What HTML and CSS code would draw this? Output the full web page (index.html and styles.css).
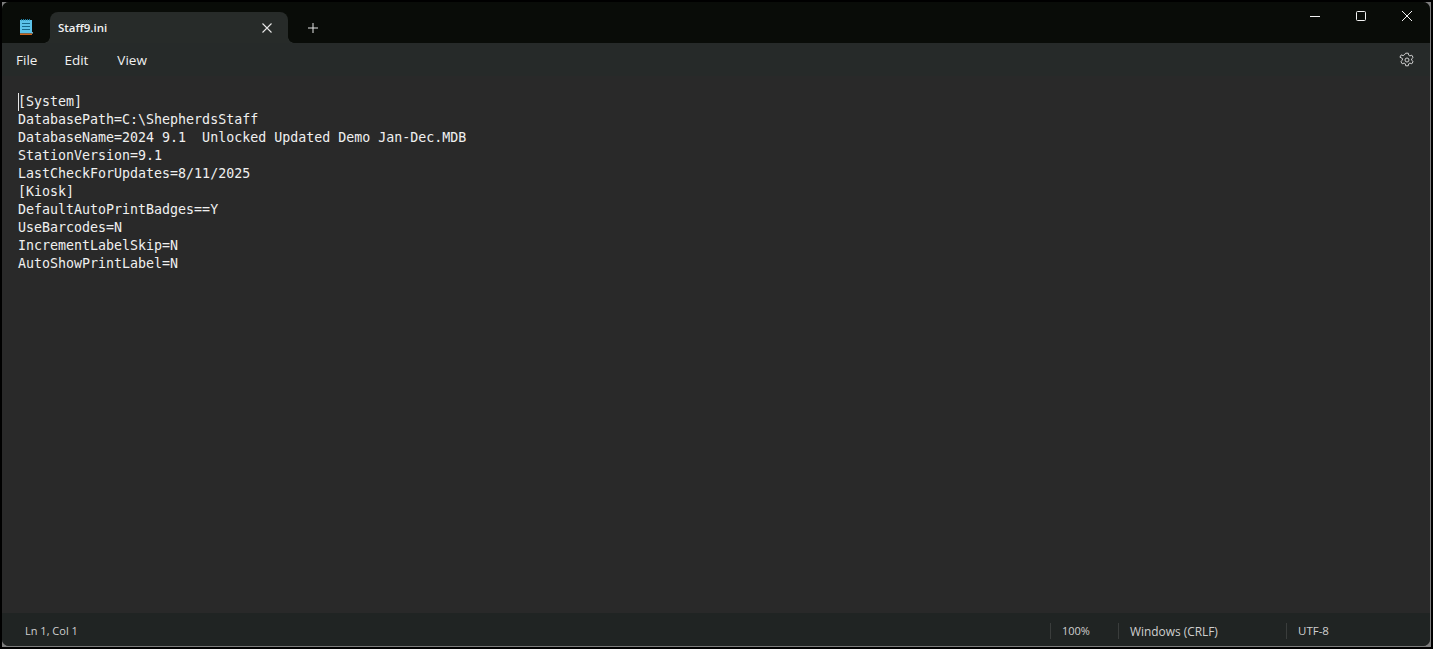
FILE: index.html
```html
<!DOCTYPE html>
<html lang="en">
<head>
<meta charset="utf-8">
<title>Staff9.ini - Notepad</title>
<link rel="stylesheet" href="styles.css">
</head>
<body>
<div class="frame">
<div class="window">
  <header class="titlebar">
    <div class="app-icon">
      <svg width="13" height="16" viewBox="0 0 13 16">
        <rect x="0" y="1" width="12" height="13.5" fill="#5cc3ea"/>
        <rect x="0" y="14.5" width="12" height="1.5" fill="#d0651c"/>
        <path d="M12 13.5l1-.5v1l-1 1z" fill="#9fdcf2"/>
        <path d="M1.5 1.5V0M3.5 1.5V0M5.5 1.5V0M7.5 1.5V0M9.5 1.5V0" stroke="#1f7fa3" stroke-width="1"/>
        <path d="M2 4.5H10M2 7.5H10M2 10.5H10" stroke="#17688a" stroke-width="1"/>
      </svg>
    </div>
    <div class="tab">
      <span class="tab-title">Staff9.ini</span>
      <svg class="tab-close" width="10" height="10" viewBox="0 0 10 10"><path d="M.5 .5L9.5 9.5M9.5 .5L.5 9.5" stroke="#e6e6e6" stroke-width="1.1" fill="none"/></svg>
    </div>
    <div class="tab-add">
      <svg width="10" height="10" viewBox="0 0 10 10"><path d="M5 0V10M0 5H10" stroke="#e6e6e6" stroke-width="1" fill="none"/></svg>
    </div>
    <div class="caption">
      <button class="cap-btn"><svg width="10" height="10" viewBox="0 0 10 10"><path d="M0 5.5H10" stroke="#f2f2f2" stroke-width="1"/></svg></button>
      <button class="cap-btn"><svg width="10" height="10" viewBox="0 0 10 10"><rect x=".5" y=".5" width="9" height="9" rx="1" fill="none" stroke="#f2f2f2" stroke-width="1"/></svg></button>
      <button class="cap-btn"><svg width="10" height="10" viewBox="0 0 10 10"><path d="M0 0L10 10M10 0L0 10" stroke="#f2f2f2" stroke-width="1" fill="none"/></svg></button>
    </div>
  </header>
  <nav class="menubar">
    <span class="menu-item menu-file">File</span>
    <span class="menu-item menu-edit">Edit</span>
    <span class="menu-item">View</span>
    <svg class="gear" width="16" height="16" viewBox="0 0 16 16">
      <path d="M6.7 1.2h2.6l.4 2 1.2.7 1.9-.7 1.3 2.3-1.5 1.3v1.4l1.5 1.3-1.3 2.3-1.9-.7-1.2.7-.4 2H6.7l-.4-2-1.2-.7-1.9.7-1.3-2.3 1.5-1.3V6.5L.9 5.2l1.3-2.3 1.9.7 1.2-.7z" fill="none" stroke="#cfcfcf" stroke-width="1" stroke-linejoin="round"/>
      <circle cx="8" cy="8" r="2" fill="none" stroke="#cfcfcf" stroke-width="1"/>
    </svg>
  </nav>
  <main class="editor"><pre class="text"><span class="caret"></span>[System]
DatabasePath=C:\ShepherdsStaff
DatabaseName=2024 9.1  Unlocked Updated Demo Jan-Dec.MDB
StationVersion=9.1
LastCheckForUpdates=8/11/2025
[Kiosk]
DefaultAutoPrintBadges==Y
UseBarcodes=N
IncrementLabelSkip=N
AutoShowPrintLabel=N</pre></main>
  <footer class="statusbar">
    <span class="status-pos">Ln 1, Col 1</span>
    <span class="status-cell status-zoom">100%</span>
    <span class="status-cell status-eol">Windows (CRLF)</span>
    <span class="status-cell status-enc">UTF-8</span>
  </footer>
</div>
</div>
</body>
</html>
```
FILE: styles.css
```css
* { box-sizing: border-box; }
html, body { margin: 0; height: 100%; background: #000; overflow: hidden; }
body { padding: 2px; }
.frame {
  height: 645px;
  padding: 0 1px 1px 0;
  background: #7d7d7d;
}
.window {
  height: 644px;
  display: flex;
  flex-direction: column;
  background: #292929;
  border-radius: 7px;
  overflow: hidden;
  font-family: "Open Sans", "Noto Sans", sans-serif;
  color: #e8e8e8;
}
.titlebar {
  height: 41px;
  flex: none;
  display: flex;
  align-items: flex-end;
  background: #090c08;
}
.app-icon { width: 48px; height: 31px; padding: 7px 0 0 18px; }
.app-icon svg { display: block; }
.tab {
  position: relative;
  width: 238px;
  height: 31px;
  background: #272b29;
  border-radius: 8px 8px 0 0;
  display: flex;
  align-items: center;
  justify-content: space-between;
  padding: 0 16px 0 8px;
}
.tab::before, .tab::after {
  content: "";
  position: absolute;
  bottom: 0;
  width: 6px;
  height: 6px;
}
.tab::before { left: -6px; background: radial-gradient(circle at 0 0, transparent 5.5px, #272b29 6px); }
.tab::after { right: -6px; background: radial-gradient(circle at 100% 0, transparent 5.5px, #272b29 6px); }
.tab-title { font-size: 11.5px; font-weight: 600; color: #f2f2f2; }
.tab-close { display: block; }
.tab-add { width: 50px; height: 31px; padding: 11px 0 0 20px; }
.tab-add svg { display: block; }
.caption { margin-left: auto; height: 41px; display: flex; align-self: flex-start; }
.cap-btn {
  width: 46px;
  height: 28px;
  padding: 0;
  border: 0;
  background: none;
  display: flex;
  align-items: center;
  justify-content: center;
}
.menubar {
  height: 33px;
  flex: none;
  display: flex;
  align-items: center;
  padding: 0 15px 0 14px;
  background: #262a29;
  font-size: 13.5px;
  color: #f0f0f0;
}
.menu-item { margin-right: 28px; }
.menu-file { margin-right: 27px; }
.menu-edit { margin-right: 29px; }
.gear { margin-left: auto; display: block; }
.editor { flex: 1; padding: 17px 0 0 16px; background: #292929; }
.text {
  position: relative;
  margin: 0;
  font-family: "DejaVu Sans Mono", "Liberation Mono", monospace;
  font-size: 13.3px;
  line-height: 18px;
  color: #f0f0f0;
}
.caret { position: absolute; left: 0; top: 0; width: 1px; height: 18px; background: #e6e6e6; }
.statusbar {
  height: 33px;
  flex: none;
  display: flex;
  align-items: center;
  padding-top: 2px;
  background: #202423;
  font-size: 11px;
  color: #cfcfcf;
}
.status-pos { margin-left: 23px; margin-right: auto; }
.status-cell { height: 16px; line-height: 16px; border-left: 1px solid #3a3d3c; padding-left: 11px; }
.status-zoom { width: 68px; }
.status-eol { width: 168px; font-size: 11.9px; }
.status-enc { width: 144px; font-size: 11.5px; }
```
